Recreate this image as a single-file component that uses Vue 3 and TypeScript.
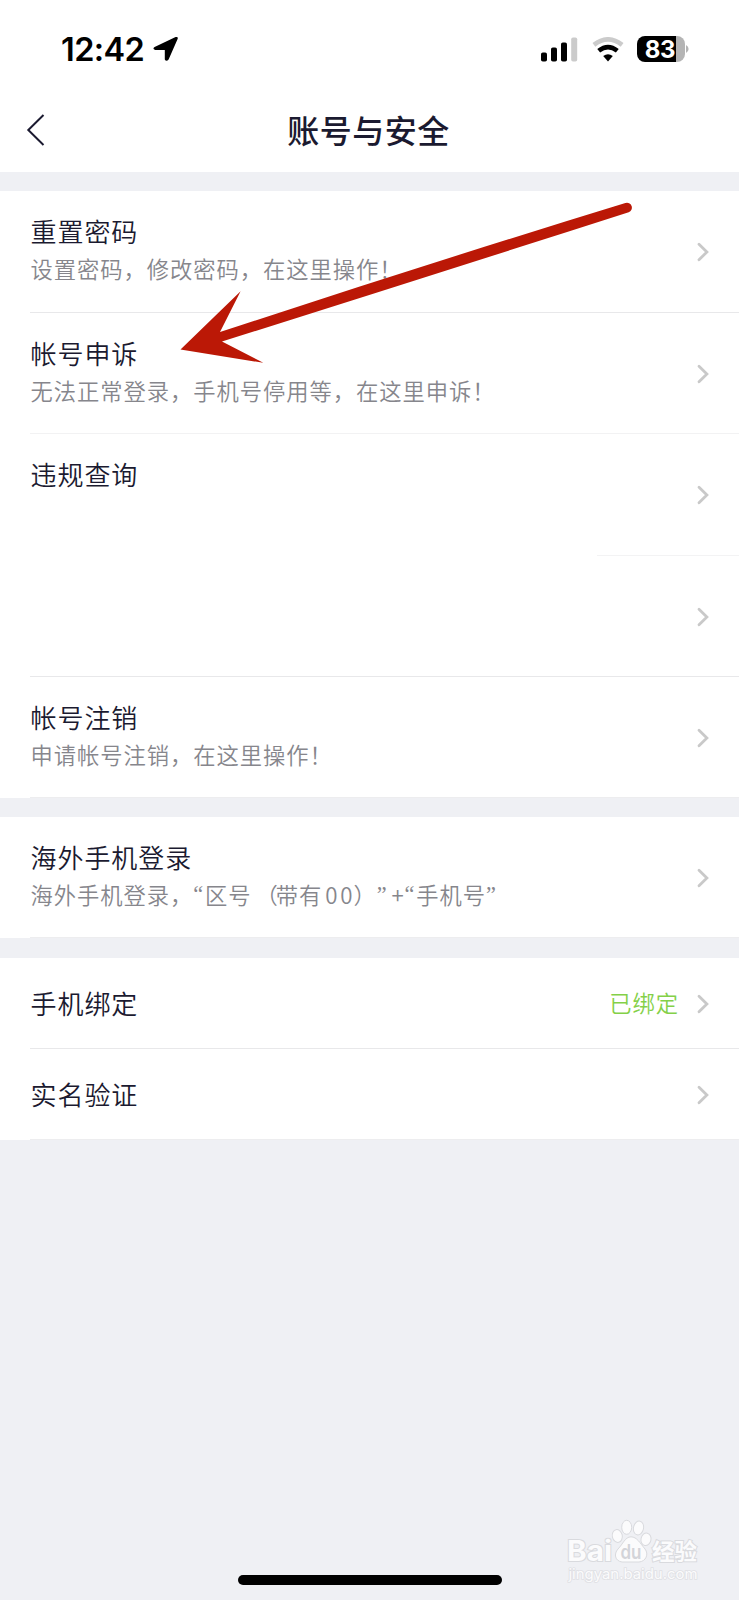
<script setup lang="ts">
interface Item {
  title: string
  desc?: string
  status?: string
  compact?: boolean
  line?: 'normal' | 'faint' | 'partial'
  tall?: boolean
}

interface Part {
  text: string
  kind: 'quote' | 'latin' | 'bracket' | 'plain'
}

const groups: Item[][] = [
  [
    { title: '重置密码', desc: '设置密码，修改密码，在这里操作！', tall: true },
    { title: '帐号申诉', desc: '无法正常登录，手机号停用等，在这里申诉！', line: 'faint' },
    { title: '违规查询', line: 'partial', tall: true },
    { title: '' },
    { title: '帐号注销', desc: '申请帐号注销，在这里操作！' },
  ],
  [{ title: '海外手机登录', desc: '海外手机登录，“区号（带有00）”+“手机号”' }],
  [
    { title: '手机绑定', status: '已绑定', compact: true },
    { title: '实名验证', compact: true },
  ],
]

// Quotes, brackets and Latin characters are spaced differently from the Chinese text.
function split(desc = ''): Part[] {
  return (desc.match(/[“”]|（|[0-9+]+|[^“”（0-9+]+/g) ?? []).map((text) => ({
    text,
    kind: /[“”]/.test(text) ? 'quote' : /[0-9+]/.test(text) ? 'latin' : text === '（' ? 'bracket' : 'plain',
  }))
}
</script>

<template>
  <div class="screen">
    <header class="top">
      <div class="statusbar">
        <div class="clock">
          <span class="time">12:42</span>
          <svg class="locate" width="26" height="26" viewBox="0 0 26 26">
            <path d="M1.6 11 22.6 1.1Q25.4.2 24.6 3.1L15.6 23.6Q13.2 26.2 11.8 23.4V14H2.2Q-1 12.8 1.6 11Z" />
          </svg>
        </div>
        <div class="indicators">
          <svg width="37" height="25" viewBox="0 0 37 25">
            <rect x="0" y="15.5" width="6" height="9" rx="1.8" />
            <rect x="10" y="10.5" width="6" height="14" rx="1.8" />
            <rect x="20" y="5.5" width="6" height="19" rx="1.8" />
            <rect x="30.2" y="0.5" width="6" height="24" rx="1.8" fill="#cbcbcb" />
          </svg>
          <svg class="wifi" width="32" height="25" viewBox="0 0 32 25">
            <path d="M1.9 7.9Q16-3.2 30.1 7.9" fill="none" stroke="#cbcbcb" stroke-width="4.6" />
            <path d="M6.7 13.8Q16 6.4 25.3 13.8" fill="none" stroke="#000" stroke-width="4.6" />
            <path d="M11.2 19.1Q16 15.3 20.8 19.1L16 24.4Z" />
          </svg>
          <div class="battery">
            <span class="level">83</span>
            <svg class="cap" width="3" height="8" viewBox="0 0 3 8"><path d="M0 0Q2.6 1.4 2.6 4T0 8Z" fill="#b4b4b4" /></svg>
          </div>
        </div>
      </div>
      <div class="navbar">
        <svg class="back" width="20" height="34" viewBox="0 0 20 34">
          <path d="M17.5 2 2.3 17l15.2 15" fill="none" stroke="#1b1a30" stroke-width="2" />
        </svg>
        <h1>账号与安全</h1>
      </div>
    </header>

    <main>
      <section v-for="(group, g) in groups" :key="g" class="group">
        <div
          v-for="(item, i) in group"
          :key="i"
          class="row"
          :class="[item.line ?? 'normal', { compact: item.compact, tall: item.tall }]"
        >
          <div class="copy">
            <div class="title">{{ item.title }}</div>
            <div v-if="!item.compact" class="desc">
              <span v-for="(part, p) in split(item.desc)" :key="p" :class="part.kind">{{ part.text }}</span>
            </div>
          </div>
          <span v-if="item.status" class="status">{{ item.status }}</span>
          <svg class="chevron" width="12" height="20" viewBox="0 0 12 20">
            <path d="M2 2.2 9.9 10 2 17.8" fill="none" stroke="#c9c9c9" stroke-width="2.8" stroke-linecap="round" />
          </svg>
        </div>
      </section>
    </main>

    <svg class="arrow" width="460" height="170" viewBox="175 200 460 170">
      <path
        d="M180.5 349.6 240.6 291.3 220 332.1Q420 266 625.4 203.1A4.8 4.8 0 0 1 628.7 212.2Q430 276 222 341.6L263.3 362.8Z"
        fill="#bb1806"
      />
    </svg>

    <svg class="watermark" width="150" height="70" viewBox="560 1515 150 70">
      <g fill="#fbfbfc" stroke="#d9dade" stroke-width="1">
        <ellipse cx="617.3" cy="1536" rx="5" ry="6.5" transform="rotate(-12 617.3 1536)" />
        <ellipse cx="626.7" cy="1527.3" rx="5" ry="7" />
        <ellipse cx="638.5" cy="1528" rx="5" ry="7" transform="rotate(12 638.5 1528)" />
        <ellipse cx="646" cy="1539.3" rx="5" ry="6.3" transform="rotate(12 646 1539.3)" />
        <path d="M631 1536.8C637 1537 640 1543 645 1549C649 1554 646 1561.5 639 1562H622C615 1561 613.5 1554 618 1549C623 1544 625 1537 631 1536.8Z" />
        <g class="mark">
          <text x="567" y="1561.3" font-size="28.5" textLength="45" lengthAdjust="spacingAndGlyphs">Bai</text>
          <text class="cn" x="652" y="1559.8" font-size="22.5" textLength="45" lengthAdjust="spacingAndGlyphs">经验</text>
        </g>
        <text class="du" x="620.5" y="1559" font-size="20" textLength="21" lengthAdjust="spacingAndGlyphs" fill="#d3d4d9" stroke="none">du</text>
        <text class="url" x="568.5" y="1578.5" font-size="14.5" textLength="129" lengthAdjust="spacingAndGlyphs">jingyan.baidu.com</text>
      </g>
    </svg>

    <div class="home"></div>
  </div>
</template>

<style>
body {
  margin: 0;
  background: #eff0f4;
}
</style>

<style scoped>
.screen {
  position: relative;
  width: 739px;
  height: 1600px;
  overflow: hidden;
  background: #eff0f4;
  color: #1b1a30;
  font-family: "Noto Sans CJK SC", sans-serif;
}
.top {
  height: 172px;
  background: #fff;
}
.statusbar {
  display: flex;
  justify-content: space-between;
  height: 91px;
  padding: 7px 50px 0 61px;
  box-sizing: border-box;
  color: #000;
}
.clock,
.indicators {
  display: flex;
  align-items: center;
}
.time {
  width: 92px;
  padding-top: 2px;
  font: 600 32.5px/40px Inter, sans-serif;
  letter-spacing: -0.6px;
}
.wifi {
  margin: 0 13.5px 0 14px;
}
.battery {
  display: flex;
  align-items: center;
}
.level {
  width: 46px;
  height: 26px;
  padding-right: 2px;
  border-radius: 8px;
  background: linear-gradient(90deg, #000 39.5px, #b4b4b4 39.5px);
  color: #fff;
  font: 700 24px/27px Inter, sans-serif;
  text-align: center;
  letter-spacing: -0.3px;
}
.cap {
  margin-left: 1px;
}
.navbar {
  display: grid;
  grid-template-columns: 90px 1fr 90px;
  align-items: center;
  height: 78px;
}
.back {
  margin-left: 26px;
}
h1 {
  margin: 0;
  padding: 0 2px 2px 0;
  font: 500 32px/40px "Noto Sans CJK SC", sans-serif;
  letter-spacing: 0.5px;
  text-align: center;
}
.group {
  margin-top: 19px;
  background: #fff;
}
.group:last-child {
  margin-top: 20px;
}
.row {
  display: flex;
  align-items: center;
  box-sizing: border-box;
  height: 121px;
  padding: 0 30px 0 30.5px;
  background: linear-gradient(#e8e8ea, #e8e8ea) 30px 100% / 100% 1px no-repeat;
}
.row.tall {
  height: 122px;
  padding-bottom: 1px;
}
.row.compact {
  height: 91px;
}
.row.faint {
  background-image: linear-gradient(#f2f2f3, #f2f2f3);
}
.row.partial {
  background-image: linear-gradient(#f3f3f4, #f3f3f4);
  background-position: 597px 100%;
}
.row:last-child {
  background-image: linear-gradient(#ededef, #ededef);
}
.copy {
  flex: 1;
  padding-bottom: 5px;
}
.title {
  height: 38px;
  font-size: 26px;
  font-weight: 350;
  line-height: 37px;
  letter-spacing: 0.95px;
}
.compact .copy {
  padding-bottom: 1px;
}
.desc {
  height: 37px;
  color: #86868c;
  font-size: 22.3px;
  font-weight: 350;
  line-height: 37px;
  letter-spacing: 0.95px;
  white-space: nowrap;
  text-spacing-trim: space-all;
}
.quote {
  font-family: "Liberation Serif", serif;
  line-height: 1;
  letter-spacing: 1.9px;
  vertical-align: 2px;
}
.bracket {
  margin: 0 -3px 0 4px;
}
.latin {
  margin: 0 -2px 0 3px;
  letter-spacing: 2.8px;
}
.status {
  margin: 0 18px 3px 0;
  color: #84d048;
  font-size: 22.3px;
  font-weight: 350;
  letter-spacing: 0.95px;
}
.chevron {
  flex: none;
}
.arrow {
  position: absolute;
  left: 175px;
  top: 200px;
}
.watermark {
  position: absolute;
  left: 560px;
  top: 1515px;
}
.mark {
  font-family: Inter, sans-serif;
  font-weight: 700;
  stroke-width: 2px;
  paint-order: stroke;
}
.cn {
  font-family: "Noto Sans CJK SC", sans-serif;
}
.du {
  font-family: Inter, sans-serif;
  font-weight: 600;
}
.url {
  font-family: Inter, sans-serif;
  stroke: #dfe0e4;
  stroke-width: 1.6px;
  paint-order: stroke;
}
.home {
  position: absolute;
  left: 238px;
  top: 1575px;
  width: 264px;
  height: 10px;
  border-radius: 5px;
  background: #000;
}
</style>
